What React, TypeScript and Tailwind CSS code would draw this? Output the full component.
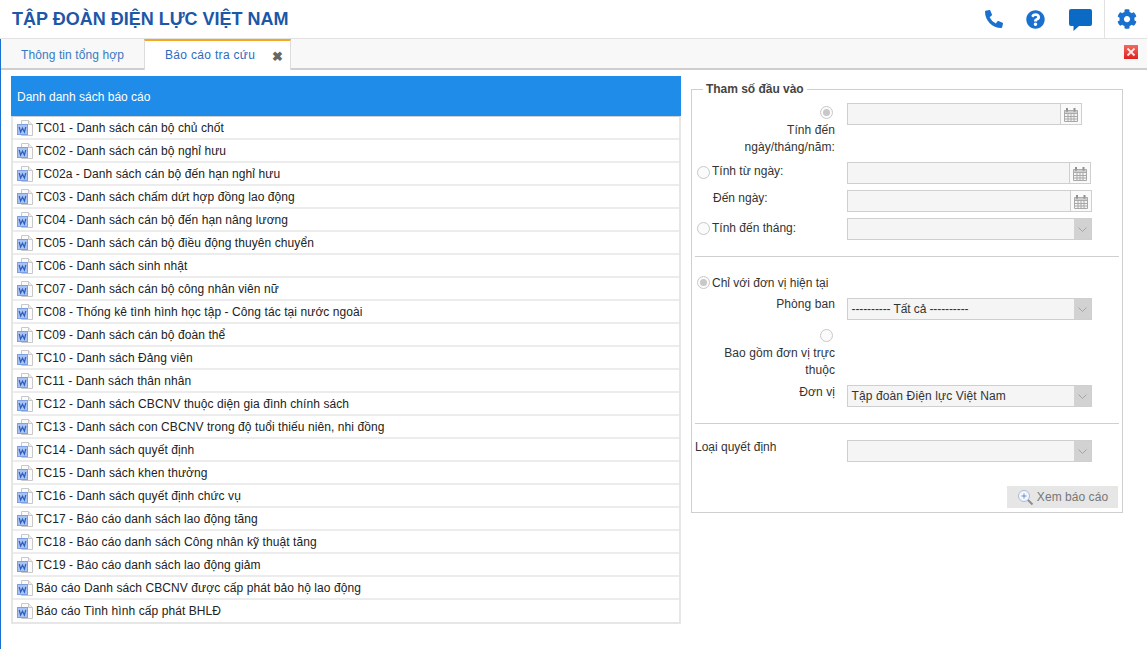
import React from 'react';
import { FaCog, FaPhoneAlt, FaQuestionCircle } from 'react-icons/fa';

const reports = [
  'TC01 - Danh sách cán bộ chủ chốt',
  'TC02 - Danh sách cán bộ nghỉ hưu',
  'TC02a - Danh sách cán bộ đến hạn nghỉ hưu',
  'TC03 - Danh sách chấm dứt hợp đồng lao động',
  'TC04 - Danh sách cán bộ đến hạn nâng lương',
  'TC05 - Danh sách cán bộ điều động thuyên chuyển',
  'TC06 - Danh sách sinh nhật',
  'TC07 - Danh sách cán bộ công nhân viên nữ',
  'TC08 - Thống kê tình hình học tập - Công tác tại nước ngoài',
  'TC09 - Danh sách cán bộ đoàn thể',
  'TC10 - Danh sách Đảng viên',
  'TC11 - Danh sách thân nhân',
  'TC12 - Danh sách CBCNV thuộc diện gia đình chính sách',
  'TC13 - Danh sách con CBCNV trong độ tuổi thiếu niên, nhi đồng',
  'TC14 - Danh sách quyết định',
  'TC15 - Danh sách khen thưởng',
  'TC16 - Danh sách quyết định chức vụ',
  'TC17 - Báo cáo danh sách lao động tăng',
  'TC18 - Báo cáo danh sách Công nhân kỹ thuật tăng',
  'TC19 - Báo cáo danh sách lao động giảm',
  'Báo cáo Danh sách CBCNV được cấp phát bảo hộ lao động',
  'Báo cáo Tình hình cấp phát BHLĐ',
];

const WordIcon = () => (
  <svg width="16" height="16" viewBox="0 0 16 16" className="shrink-0">
    <path d="M4.5 0.5H11.5L15.5 4.5V15.5H4.5Z" fill="#fbfbfb" stroke="#c8c8c8" />
    <path d="M11.5 0.5V4.5H15.5" fill="#eeeeee" stroke="#c8c8c8" />
    <rect x="0.5" y="4.5" width="10" height="10" fill="#a9c3f2" stroke="#7f9fe0" />
    <path d="M2.2 7L3.6 12L5.5 8.2L7.4 12L8.8 7" fill="none" stroke="#2f5fbe" strokeWidth="1.2" />
  </svg>
);

const CalendarIcon = () => (
  <svg width="14" height="15" viewBox="0 0 14 15">
    <path d="M0.5 3.5H13.5V14.5H0.5Z" fill="#f4f4f4" stroke="#a8a8a8" />
    <path d="M0.5 6.5H13.5M0.5 9.5H13.5M0.5 12H13.5M4 6.5V14.5M7 6.5V14.5M10 6.5V14.5" stroke="#a8a8a8" />
    <path d="M3 1V5M10.5 1V5" stroke="#8f8f8f" strokeWidth="2" />
    <rect x="0.5" y="3.5" width="13" height="3" fill="#b4b4b4" opacity="0.6" />
  </svg>
);

const Radio = ({ checked = false }: { checked?: boolean }) => (
  <span className="flex h-[13px] w-[13px] shrink-0 items-center justify-center rounded-full border border-[#c8c8c8] bg-[#fbfbfb]">
    {checked && <span className="h-[7px] w-[7px] rounded-full bg-[#c8c8c8]" />}
  </span>
);

const DateInput = ({ width }: { width: string }) => (
  <div className={`flex h-[22px] border border-[#cfcfcf] ${width}`}>
    <div className="flex-1 border-r border-[#cfcfcf] bg-[#f5f5f5]" />
    <div className="flex w-[20px] items-center justify-center bg-[#fafafa]">
      <CalendarIcon />
    </div>
  </div>
);

const SelectBox = ({ value = '', tracking = '' }: { value?: string; tracking?: string }) => (
  <div className="flex h-[22px] w-[245px] items-center border border-[#cfcfcf] bg-[#f5f5f5]">
    <span className={`flex-1 pl-[3.5px] ${tracking}`}>{value}</span>
    <span className="flex h-[20px] w-[17px] items-center justify-center bg-[#d2d2d2]">
      <svg width="9" height="5" viewBox="0 0 9 5">
        <path d="M0.5 0.5L4.5 4.5L8.5 0.5" fill="none" stroke="#a4a4a4" />
      </svg>
    </span>
  </div>
);

const Label = ({ children }: { children: React.ReactNode }) => (
  <div className="w-[140px] text-right leading-[17px] tracking-[0.08px]">{children}</div>
);

export default function App() {
  return (
    <div className="h-[649px] w-[1147px] overflow-hidden bg-white font-['Liberation_Sans',Arial,sans-serif] text-[12px] text-[#333]">
      <header className="flex h-[39px] items-center border-b border-[#e2e2e2] pl-[12px]">
        <h1 className="flex-1 text-[18px] font-bold leading-none text-[#1c57a8]">TẬP ĐOÀN ĐIỆN LỰC VIỆT NAM</h1>
        <div className="flex h-full items-center text-[#1a70cf]">
          <FaPhoneAlt className="mr-[23px] h-[18px] w-[18px]" />
          <FaQuestionCircle className="mr-[24px] h-[19px] w-[19px]" />
          <svg width="23" height="22" viewBox="0 0 23 22" className="mr-[12px] mt-[1px]">
            <path d="M2 0H21Q23 0 23 2V15Q23 17 21 17H10L4.5 22V17H2Q0 17 0 15V2Q0 0 2 0Z" fill="#0a6ac4" />
          </svg>
          <div className="flex h-full w-[43px] items-center justify-center border-l border-[#e2e2e2] pl-[2px]">
            <FaCog className="h-[20px] w-[20px]" />
          </div>
        </div>
      </header>

      <div className="flex h-[610px] border-l border-[#1a70cf]">
        <div className="w-full">
          <nav className="flex h-[31px] items-stretch border-b-2 border-[#cfcfcf] bg-[#f8f8f8]">
            <div className="flex w-[143px] items-center justify-center pt-[2px] tracking-[0.1px] text-[#3a78c4]">Thông tin tổng hợp</div>
            <div className="relative -mb-[2px] flex w-[147px] items-center border-x border-t-2 border-x-[#dcdcdc] border-t-[#f5a623] bg-white pb-[1px] pl-[20px] tracking-[0.32px] text-[#2a6cc0]">
              Báo cáo tra cứu
              <span className="absolute left-[127px] top-[9px] text-[13px] font-bold leading-[14px] text-[#666]">✖</span>
            </div>
            <div className="flex-1" />
            <svg width="14" height="14" viewBox="0 0 14 14" className="mr-[9px] mt-[6px]">
              <defs>
                <linearGradient id="closeRed" x1="0" y1="0" x2="0" y2="1">
                  <stop offset="0" stopColor="#f26a5e" />
                  <stop offset="1" stopColor="#e0201f" />
                </linearGradient>
              </defs>
              <rect width="14" height="14" fill="url(#closeRed)" />
              <path d="M3.5 3.5L10.5 10.5M10.5 3.5L3.5 10.5" stroke="#fdeaea" strokeWidth="1.8" />
            </svg>
          </nav>

          <main className="flex items-start pl-[10px] pt-[6px]">
            <section className="w-[670px]">
              <div className="flex h-[40px] items-center bg-[#1e8ce8] pl-[6px] pt-[1px] text-white">Danh danh sách báo cáo</div>
              <ul className="border-x-2 border-b-2 border-t border-[#e6e6e6] border-t-[#cfcfcf]">
                {reports.map((name, idx) => (
                  <li
                    key={name}
                    className={`flex items-center gap-[3px] pl-[4px] tracking-[0.08px] text-[#222] ${idx < reports.length - 1 ? 'h-[23px] border-b-2 border-[#ececec]' : 'h-[22px]'}`}
                  >
                    <WordIcon />
                    <span>{name}</span>
                  </li>
                ))}
              </ul>
            </section>

            <fieldset className="ml-[10px] mt-[6px] h-[431px] w-[432px] border border-[#cfcfcf] px-[3px]">
              <legend className="ml-[8px] px-[3px] font-bold leading-[14px] tracking-[-0.03px] text-[#444]">Tham số đầu vào</legend>

              <div className="mt-[7px] flex flex-col">
                <div className="flex items-start">
                  <div className="w-[140px]">
                    <div className="flex h-[18px] justify-end pr-[2px] pt-[3px]"><Radio checked /></div>
                    <div className="mt-[1px]"><Label>Tính đến<br />ngày/tháng/năm:</Label></div>
                  </div>
                  <div className="ml-[12px]"><DateInput width="w-[235px]" /></div>
                </div>
                <div className="mt-[6px] flex h-[22px] items-center gap-[2px] pl-[2px]">
                  <span className="mb-[2px]"><Radio /></span>
                  <span className="mb-[4px] w-[125px]">Tính từ ngày:</span>
                  <div className="ml-[8px]"><DateInput width="w-[244px]" /></div>
                </div>
                <div className="mt-[6px] flex h-[22px] items-center">
                  <span className="mb-[6px] w-[152px] pl-[18px]">Đến ngày:</span>
                  <DateInput width="w-[245px]" />
                </div>
                <div className="mt-[6px] flex h-[22px] items-center gap-[2px] pl-[2px]">
                  <span className="mb-[2px]"><Radio /></span>
                  <span className="mb-[2px] w-[125px]">Tính đến tháng:</span>
                  <div className="ml-[8px]"><SelectBox /></div>
                </div>

                <hr className="mb-[17px] mt-[16px] w-[424px] border-[#cfcfcf]" />

                <div className="flex h-[17px] items-center gap-[2px] pl-[2px]">
                  <Radio checked />
                  <span>Chỉ với đơn vị hiện tại</span>
                </div>
                <div className="mt-[7px] flex items-start">
                  <div className="-mt-[2px]"><Label>Phòng ban</Label></div>
                  <div className="ml-[12px]"><SelectBox value="---------- Tất cả ----------" tracking="tracking-[-0.1px]" /></div>
                </div>
                <div className="mt-[9px] flex justify-start">
                  <div className="w-[140px]">
                    <div className="flex h-[17px] justify-end pr-[2px]"><Radio /></div>
                    <div className="-mt-px"><Label>Bao gồm đơn vị trực<br />thuộc</Label></div>
                  </div>
                </div>
                <div className="flex items-start pt-[6px]">
                  <div className="-mt-px"><Label>Đơn vị</Label></div>
                  <div className="ml-[12px]"><SelectBox value="Tập đoàn Điện lực Việt Nam" tracking="tracking-[0.12px]" /></div>
                </div>

                <hr className="mb-[16px] mt-[16px] w-[424px] border-[#cfcfcf]" />

                <div className="flex items-start">
                  <span className="w-[152px] pt-[1px] leading-[13px]">Loại quyết định</span>
                  <SelectBox />
                </div>

                <div className="mt-[24px] flex justify-start pl-[312px]">
                  <div className="flex h-[22px] w-[111px] items-center justify-center gap-[3px] bg-[#e6e6e6] tracking-[0.05px] text-[#777]">
                    <svg width="17" height="17" viewBox="0 0 17 17">
                      <circle cx="7" cy="7" r="5.5" fill="#f2f6fd" stroke="#aebcd2" />
                      <path d="M7 4.5V9.5M4.5 7H9.5" stroke="#6f8fd0" />
                      <path d="M11 11L15.5 15.5" stroke="#8d8d8d" strokeWidth="2" />
                    </svg>
                    Xem báo cáo
                  </div>
                </div>
              </div>
            </fieldset>
          </main>
        </div>
      </div>
    </div>
  );
}
